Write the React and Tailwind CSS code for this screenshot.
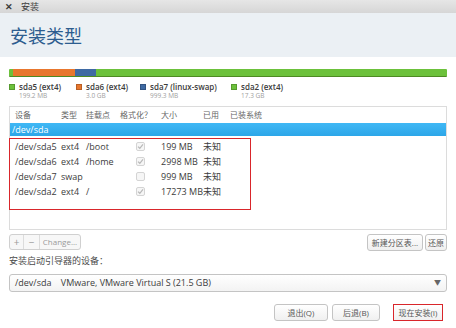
import React from 'react';

const parts = [
  { name: 'sda5 (ext4)', size: '199.2 MB', color: 'bg-[#6cc13b]' },
  { name: 'sda6 (ext4)', size: '3.0 GB', color: 'bg-[#e8772e]' },
  { name: 'sda7 (linux-swap)', size: '999.3 MB', color: 'bg-[#3f6aa3]' },
  { name: 'sda2 (ext4)', size: '17.3 GB', color: 'bg-[#6cc13b]' },
];

const rows = [
  { dev: '/dev/sda5', type: 'ext4', mount: '/boot', fmt: true, size: '199 MB', used: '未知' },
  { dev: '/dev/sda6', type: 'ext4', mount: '/home', fmt: true, size: '2998 MB', used: '未知' },
  { dev: '/dev/sda7', type: 'swap', mount: '', fmt: false, size: '999 MB', used: '未知' },
  { dev: '/dev/sda2', type: 'ext4', mount: '/', fmt: true, size: '17273 MB', used: '未知' },
];

const cols = 'grid grid-cols-[46px_25px_34px_41px_42px_27px_1fr]';

const Check = ({ on }) => (
  <span className="w-[9px] h-[9px] rounded-[2px] border border-[#d4d4d4] bg-[#f6f6f6] flex items-center justify-center">
    {on && (
      <svg width="7" height="7" viewBox="0 0 7 7">
        <path d="M1 3.6 L2.8 5.3 L6 1.4" stroke="#b8b8b8" strokeWidth="1.2" fill="none" />
      </svg>
    )}
  </span>
);

const Btn = ({ children, className = '' }) => (
  <button className={`h-[17px] border border-[#c4c4c4] rounded-[3px] bg-gradient-to-b from-white to-[#f0f0f0] text-[8px] text-[#555] flex items-center justify-center whitespace-nowrap overflow-hidden ${className}`}>
    {children}
  </button>
);

export default function App() {
  return (
    <div className="w-[456px] h-[328px] bg-white overflow-hidden text-[#4c4c4c]" style={{ fontFamily: '"Open Sans", "Noto Sans CJK SC", sans-serif' }}>
      <div className="h-[13px] bg-gradient-to-b from-[#e6e6e6] to-[#d6d6d6] flex items-center gap-[8px] px-[5px] text-[9px] text-[#3c3c3c]">
        <span className="font-bold">✕</span>
        <span>安装</span>
      </div>
      <div className="h-[44px] bg-[#ebf0f4] flex items-center px-[10px]">
        <h1 className="text-[18px] text-[#2d5d8f] leading-none mt-[1px]">安装类型</h1>
      </div>

      <div className="px-[9px] pt-[12px]">
        <div className="h-[8px] flex rounded-[1px] overflow-hidden border-b border-[#4d8a23]">
          <div className="w-[4px] bg-[#6cc13b]" />
          <div className="w-[62px] bg-[#e8772e]" />
          <div className="w-[21px] bg-[#3f6aa3]" />
          <div className="flex-1 bg-[#6cc13b]" />
        </div>

        <div className="flex mt-[4px] h-[19px]">
          {parts.map((p, i) => (
            <div key={i} className={`flex gap-[4px] shrink-0 ${['w-[67px]', 'w-[64px]', 'w-[91px]', 'w-[80px]'][i]}`}>
              <span className={`w-[6px] h-[6px] mt-[3px] shrink-0 ${p.color} border border-black/20`} />
              <div className="whitespace-nowrap">
                <div className="text-[8px] leading-[11px] font-semibold text-[#3c3c3c]">{p.name}</div>
                <div className="text-[6.5px] leading-[8px] text-[#a0a0a0]">{p.size}</div>
              </div>
            </div>
          ))}
        </div>

        <div className="mt-[6px] h-[124px] border border-[#dcdcdc]">
          <div className={`${cols} h-[16px] items-center px-[5px] text-[8px] text-[#666] whitespace-nowrap`}>
            <span>设备</span>
            <span>类型</span>
            <span>挂载点</span>
            <span>格式化？</span>
            <span>大小</span>
            <span>已用</span>
            <span>已装系统</span>
          </div>
          <div className="h-[13px] bg-gradient-to-b from-[#40b8f5] to-[#2ca6e8] text-white px-[2px] flex items-center text-[9px]">/dev/sda</div>
          <div className="mt-[2px] mr-[195px] h-[72px] border-[1.5px] border-[#d9262b] -ml-[1px]">
            {rows.map((r) => (
              <div key={r.dev} className={`${cols} h-[15px] items-center pl-[5px] text-[9px] text-[#3c3c3c] whitespace-nowrap`}>
                <span>{r.dev}</span>
                <span>{r.type}</span>
                <span>{r.mount}</span>
                <span className="flex justify-center"><Check on={r.fmt} /></span>
                <span>{r.size}</span>
                <span>{r.used}</span>
                <span />
              </div>
            ))}
          </div>
        </div>

        <div className="flex justify-between mt-[4px]">
          <div className="flex border border-[#d0d0d0] rounded-[3px] h-[16px] text-[10px] text-[#9a9a9a] bg-[#f7f7f7]">
            <span className="w-[14px] flex items-center justify-center border-r border-[#dcdcdc]">+</span>
            <span className="w-[16px] flex items-center justify-center border-r border-[#dcdcdc]">−</span>
            <span className="w-[40px] flex items-center justify-center text-[8px]">Change...</span>
          </div>
          <div className="flex gap-[2px]">
            <Btn className="w-[56px]">新建分区表...</Btn>
            <Btn className="w-[22px]">还原</Btn>
          </div>
        </div>

        <div className="mt-[3px] text-[9px] text-[#4c4c4c] h-[14px] flex items-center">安装启动引导器的设备：</div>

        <div className="mt-[6px] h-[18px] border border-[#c4c4c4] rounded-[3px] bg-gradient-to-b from-white to-[#f3f3f3] flex items-center justify-between px-[5px] text-[9px] text-[#3c3c3c]">
          <span className="whitespace-pre">/dev/sda    VMware, VMware Virtual S (21.5 GB)</span>
          <span className="text-[7px] text-[#666]">▼</span>
        </div>

        <div className="flex justify-end gap-[4px] mt-[12px] pr-[4px]">
          <Btn className="w-[54px]">退出(Q)</Btn>
          <Btn className="w-[48px] mr-[9px]">后退(B)</Btn>
          <Btn className="w-[50px] border-[#d9262b] border-[1.5px] rounded-none">现在安装(I)</Btn>
        </div>
      </div>
    </div>
  );
}
